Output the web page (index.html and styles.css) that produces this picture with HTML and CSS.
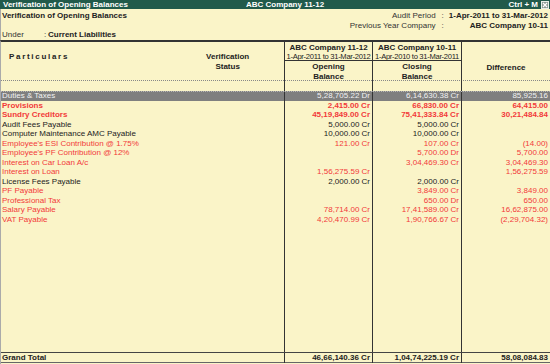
FILE: index.html
```html
<!DOCTYPE html>
<html>
<head>
<meta charset="utf-8">
<link rel="stylesheet" href="styles.css">
</head>
<body>
<div class="titlebar">
  <span class="tb-title">Verification of Opening Balances</span>
  <span class="tb-company">ABC Company 11-12</span>
  <span class="tb-key">Ctrl + M</span>
  <svg class="tb-close" width="8" height="8" viewBox="0 0 8 8"><rect x="0.5" y="0.5" width="7" height="7" fill="#8a9a94" stroke="#e8eee9"/><path d="M2 2 L6 6 M6 2 L2 6" stroke="#fff" stroke-width="1.2"/></svg>
</div>
<div class="info">
  <div class="info-top">
    <div class="subtitle">Verification of Opening Balances</div>
    <div class="period">
      <span class="lbl">Audit Period</span><span class="colon">:</span><span class="val">1-Apr-2011 to 31-Mar-2012</span>
      <span class="lbl">Previous Year Company</span><span class="colon">:</span><span class="val">ABC Company 10-11</span>
    </div>
  </div>
  <div class="under"><span class="under-lbl">Under</span><span class="under-colon">:</span><span class="under-val">Current Liabilities</span></div>
</div>
<div class="report">
  <div class="head">
    <div class="h-part">
      <span class="h-particulars">Particulars</span>
      <span class="h-status">Verification<br>Status</span>
    </div>
    <div class="h-col">
      <div class="h-company"><b>ABC Company 11-12</b><br><span class="h-date">1-Apr-2011 to 31-Mar-2012</span></div>
      <div class="h-bal">Opening<br>Balance</div>
    </div>
    <div class="h-col">
      <div class="h-company"><b>ABC Company 10-11</b><br><span class="h-date">1-Apr-2010 to 31-Mar-2011</span></div>
      <div class="h-bal">Closing<br>Balance</div>
    </div>
    <div class="h-diff">Difference</div>
  </div>
  <div class="row spacer"><div class="c"></div><div class="n"></div><div class="n"></div><div class="n"></div></div>
  <div class="row sel"><div class="c">Duties &amp; Taxes</div><div class="n">5,28,705.22 Dr</div><div class="n">6,14,630.38 Cr</div><div class="n">85,925.16</div></div>
  <div class="row red bold"><div class="c">Provisions</div><div class="n">2,415.00 Cr</div><div class="n">66,830.00 Cr</div><div class="n">64,415.00</div></div>
  <div class="row red bold"><div class="c">Sundry Creditors</div><div class="n">45,19,849.00 Cr</div><div class="n">75,41,333.84 Cr</div><div class="n">30,21,484.84</div></div>
  <div class="row"><div class="c">Audit Fees Payable</div><div class="n">5,000.00 Cr</div><div class="n">5,000.00 Cr</div><div class="n"></div></div>
  <div class="row"><div class="c">Computer Maintenance AMC Payable</div><div class="n">10,000.00 Cr</div><div class="n">10,000.00 Cr</div><div class="n"></div></div>
  <div class="row red"><div class="c">Employee's ESI Contribution @ 1.75%</div><div class="n">121.00 Cr</div><div class="n">107.00 Cr</div><div class="n">(14.00)</div></div>
  <div class="row red"><div class="c">Employee's PF Contribution @ 12%</div><div class="n"></div><div class="n">5,700.00 Dr</div><div class="n">5,700.00</div></div>
  <div class="row red"><div class="c">Interest on Car Loan A/c</div><div class="n"></div><div class="n">3,04,469.30 Cr</div><div class="n">3,04,469.30</div></div>
  <div class="row red"><div class="c">Interest on Loan</div><div class="n">1,56,275.59 Cr</div><div class="n"></div><div class="n">1,56,275.59</div></div>
  <div class="row"><div class="c">License Fees Payable</div><div class="n">2,000.00 Cr</div><div class="n">2,000.00 Cr</div><div class="n"></div></div>
  <div class="row red"><div class="c">PF Payable</div><div class="n"></div><div class="n">3,849.00 Cr</div><div class="n">3,849.00</div></div>
  <div class="row red"><div class="c">Professional Tax</div><div class="n"></div><div class="n">650.00 Dr</div><div class="n">650.00</div></div>
  <div class="row red"><div class="c">Salary Payable</div><div class="n">78,714.00 Cr</div><div class="n">17,41,589.00 Cr</div><div class="n">16,62,875.00</div></div>
  <div class="row red"><div class="c">VAT Payable</div><div class="n">4,20,470.99 Cr</div><div class="n">1,90,766.67 Cr</div><div class="n">(2,29,704.32)</div></div>
  <div class="row filler"><div class="c"></div><div class="n"></div><div class="n"></div><div class="n"></div></div>
  <div class="row total"><div class="c">Grand Total</div><div class="n">46,66,140.36 Cr</div><div class="n">1,04,74,225.19 Cr</div><div class="n">58,08,084.83</div></div>
</div>
</body>
</html>
```
FILE: styles.css
```css
* { box-sizing: border-box; }
html, body { margin: 0; padding: 0; }
body {
  width: 550px;
  height: 364px;
  overflow: hidden;
  background: #faf4c8;
  color: #222;
  font-family: "Liberation Sans", Arial, sans-serif;
  font-size: 8px;
  display: flex;
  flex-direction: column;
}
.titlebar {
  height: 9px;
  line-height: 9px;
  background: #215a4b;
  color: #fff;
  font-weight: bold;
  display: flex;
  align-items: center;
  padding-left: 3px;
}
.tb-company { margin-left: 118px; }
.tb-key { margin-left: auto; margin-right: 3px; }
.tb-close { margin-right: 1px; display: block; }

.info {
  height: 31px;
  padding-top: 2px;
  border-left: 1px solid #aaa;
}
.info-top {
  display: flex;
  justify-content: space-between;
}
.subtitle {
  font-weight: bold;
  line-height: 9.5px;
  padding-left: 1px;
}
.period {
  display: grid;
  grid-template-columns: auto auto auto;
  line-height: 9.5px;
  color: #333;
}
.period .lbl { text-align: right; }
.period .colon { padding: 0 5px 0 6px; }
.period .val { text-align: right; font-weight: bold; color: #222; padding-right: 2px; }
.under {
  display: flex;
  line-height: 9px;
  padding-left: 1px;
  color: #333;
}
.under-lbl { width: 42px; }
.under-colon { width: 4px; }
.under-val { font-weight: bold; color: #222; }

.report {
  flex: 1;
  display: flex;
  flex-direction: column;
  border-top: 2px solid #333;
  border-left: 1px solid #aaa;
}
.head {
  display: grid;
  grid-template-columns: 283px 88px 89px 1fr;
  height: 39px;
  border-bottom: 1px dotted #888;
}
.h-part {
  display: flex;
  align-items: flex-start;
  padding-top: 10px;
  font-weight: bold;
}
.h-particulars {
  margin-left: 8px;
  letter-spacing: 1.7px;
  line-height: 9.5px;
}
.h-status {
  margin-left: 137px;
  text-align: center;
  line-height: 9.5px;
}
.h-col {
  border-left: 1px solid #333;
  display: flex;
  flex-direction: column;
  text-align: center;
}
.h-company {
  height: 19px;
  line-height: 9px;
  padding-top: 0.5px;
  border-bottom: 1px solid #333;
  white-space: nowrap;
  overflow: hidden;
}
.h-date {
  font-size: 7.6px;
  letter-spacing: -0.3px;
}
.h-bal {
  font-weight: bold;
  line-height: 9.5px;
  padding-top: 1px;
}
.h-diff {
  border-left: 1px solid #333;
  font-weight: bold;
  text-align: center;
  padding-top: 21px;
}

.row {
  display: grid;
  grid-template-columns: 283px 88px 89px 1fr;
  height: 9.5px;
  line-height: 9.5px;
  white-space: nowrap;
}
.row .c { padding-left: 1px; overflow: hidden; }
.row .n {
  border-left: 1px solid #333;
  text-align: right;
  padding-right: 2px;
}
.spacer { height: 10px; }
.sel {
  background: #7f7f7f;
  color: #f2f2f2;
  border-top: 1px dotted #b8b8b8;
  line-height: 8.5px;
}
.red { color: #f23a3a; }
.bold { font-weight: bold; }
.filler { flex: 1; height: auto; }
.total {
  height: 11px;
  line-height: 9.5px;
  border-top: 1px solid #444;
  border-bottom: 1px solid #666;
  font-weight: bold;
  color: #222;
  margin-bottom: 1px;
}
```
